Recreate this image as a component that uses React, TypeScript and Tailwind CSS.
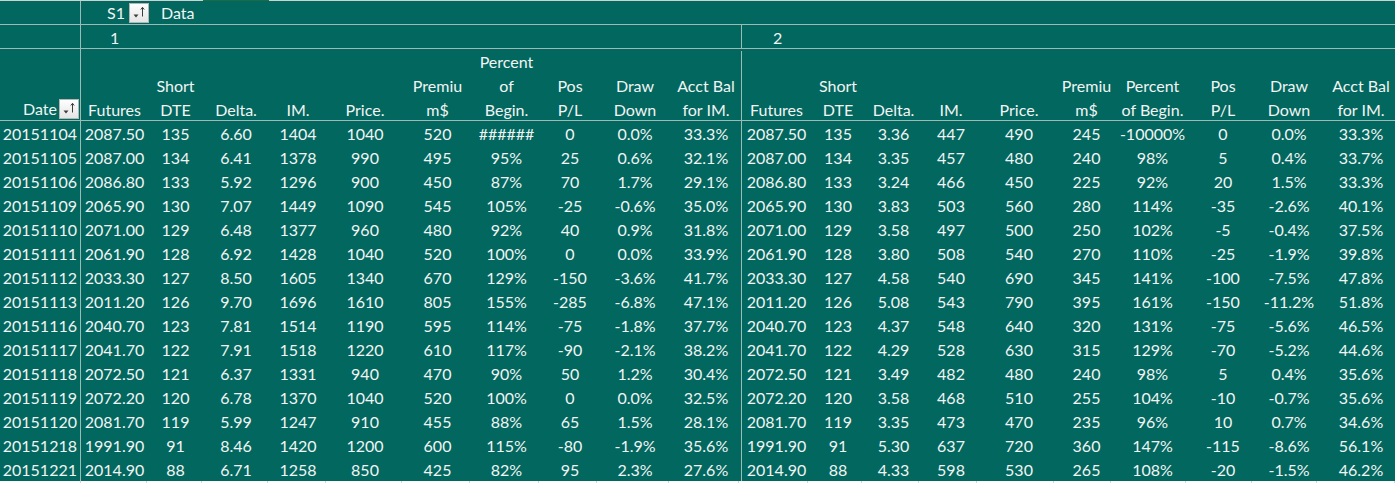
const line = "border-[#9dbbb6]"

const dateW = "w-[81px] border-r " + line
const g1 = [
  "w-[67px]",
  "w-[55px]",
  "w-[66px]",
  "w-[58px]",
  "w-[76px]",
  "w-[69px]",
  "w-[69px]",
  "w-[58px]",
  "w-[72px]",
  "w-[71px] border-r " + line,
]
const g2 = ["w-[69px]", "w-[54px]", "w-[57px]", "w-[58px]", "w-[78px]", "w-[57px]", "w-[75px]", "w-[66px]", "w-[66px]", "w-[78px]"]

const head1 = [
  ["Futures"],
  ["Short", "DTE"],
  ["Delta."],
  ["IM."],
  ["Price."],
  ["Premiu", "m$"],
  ["Percent", "of", "Begin."],
  ["Pos", "P/L"],
  ["Draw", "Down"],
  ["Acct Bal", "for IM."],
]
const head2 = [
  ["Futures"],
  ["Short", "DTE"],
  ["Delta."],
  ["IM."],
  ["Price."],
  ["Premiu", "m$"],
  ["Percent", "of Begin."],
  ["Pos", "P/L"],
  ["Draw", "Down"],
  ["Acct Bal", "for IM."],
]

const rows = [
  ["20151104", "2087.50 135 6.60 1404 1040 520 ###### 0 0.0% 33.3%", "2087.50 135 3.36 447 490 245 -10000% 0 0.0% 33.3%"],
  ["20151105", "2087.00 134 6.41 1378 990 495 95% 25 0.6% 32.1%", "2087.00 134 3.35 457 480 240 98% 5 0.4% 33.7%"],
  ["20151106", "2086.80 133 5.92 1296 900 450 87% 70 1.7% 29.1%", "2086.80 133 3.24 466 450 225 92% 20 1.5% 33.3%"],
  ["20151109", "2065.90 130 7.07 1449 1090 545 105% -25 -0.6% 35.0%", "2065.90 130 3.83 503 560 280 114% -35 -2.6% 40.1%"],
  ["20151110", "2071.00 129 6.48 1377 960 480 92% 40 0.9% 31.8%", "2071.00 129 3.58 497 500 250 102% -5 -0.4% 37.5%"],
  ["20151111", "2061.90 128 6.92 1428 1040 520 100% 0 0.0% 33.9%", "2061.90 128 3.80 508 540 270 110% -25 -1.9% 39.8%"],
  ["20151112", "2033.30 127 8.50 1605 1340 670 129% -150 -3.6% 41.7%", "2033.30 127 4.58 540 690 345 141% -100 -7.5% 47.8%"],
  ["20151113", "2011.20 126 9.70 1696 1610 805 155% -285 -6.8% 47.1%", "2011.20 126 5.08 543 790 395 161% -150 -11.2% 51.8%"],
  ["20151116", "2040.70 123 7.81 1514 1190 595 114% -75 -1.8% 37.7%", "2040.70 123 4.37 548 640 320 131% -75 -5.6% 46.5%"],
  ["20151117", "2041.70 122 7.91 1518 1220 610 117% -90 -2.1% 38.2%", "2041.70 122 4.29 528 630 315 129% -70 -5.2% 44.6%"],
  ["20151118", "2072.50 121 6.37 1331 940 470 90% 50 1.2% 30.4%", "2072.50 121 3.49 482 480 240 98% 5 0.4% 35.6%"],
  ["20151119", "2072.20 120 6.78 1370 1040 520 100% 0 0.0% 32.5%", "2072.20 120 3.58 468 510 255 104% -10 -0.7% 35.6%"],
  ["20151120", "2081.70 119 5.99 1247 910 455 88% 65 1.5% 28.1%", "2081.70 119 3.35 473 470 235 96% 10 0.7% 34.6%"],
  ["20151218", "1991.90 91 8.46 1420 1200 600 115% -80 -1.9% 35.6%", "1991.90 91 5.30 637 720 360 147% -115 -8.6% 56.1%"],
  ["20151221", "2014.90 88 6.71 1258 850 425 82% 95 2.3% 27.6%", "2014.90 88 4.33 598 530 265 108% -20 -1.5% 46.2%"],
]

function FilterButton() {
  return (
    <svg width="20" height="20" viewBox="0 0 20 20" className="shrink-0">
      <defs>
        <linearGradient id="fb" x1="0" y1="0" x2="0" y2="1">
          <stop offset="0" stopColor="#ffffff" />
          <stop offset="1" stopColor="#e4e4e4" />
        </linearGradient>
      </defs>
      <rect x="0.5" y="0.5" width="19" height="19" fill="url(#fb)" stroke="#b5b5b5" />
      <path d="M4.5 11.5 L9.5 11.5 L7 14.5 Z" fill="#3c3c3c" />
      <path d="M13.5 13.5 L13.5 4.5 M11.8 6.5 L13.5 4.3 L15.2 6.5" stroke="#3c3c3c" strokeWidth="1" fill="none" />
    </svg>
  )
}

export default function App() {
  return (
    <div className="w-[1395px] h-[483px] overflow-hidden bg-white font-['Lato',sans-serif] text-[16px] text-[#f2f4f3]">
      <div className="w-[1400px] bg-[#01675f]">
        {/* top edge */}
        <div className="flex h-px bg-[#c9d4d2]">
          <div className="w-[203px]" />
          <div className="w-[66px] bg-[#1d6b45]" />
        </div>

        {/* S1 / Data */}
        <div className={"flex h-[24px] border-b " + line}>
          <div className={dateW} />
          <div className="flex items-center pl-[26px] pt-px">
            <span>S1</span>
            <span className="ml-[4px] mt-[-1px]">
              <FilterButton />
            </span>
            <span className="ml-[12px]">Data</span>
          </div>
        </div>

        {/* group numbers */}
        <div className={"flex h-[24px] border-b leading-[26px] " + line}>
          <div className={dateW} />
          <div className={"w-[661px] border-r pl-[29px] " + line}>1</div>
          <div className="pl-[31px]">2</div>
        </div>

        {/* column headers */}
        <div className={"flex h-[72px] border-b " + line}>
          <div className={"flex items-end justify-end h-full pr-[1px] pb-[1px] " + dateW}>
            <span className="leading-[24px] mr-[2px] translate-y-[2px]">Date</span>
            <span>
              <FilterButton />
            </span>
          </div>
          {head1.map((h, i) => (
            <div key={"a" + i} className={"flex flex-col justify-end items-center h-full leading-[24px] translate-y-[2px] " + g1[i]}>
              {h.map((t) => (
                <span key={t} className="whitespace-nowrap">
                  {t}
                </span>
              ))}
            </div>
          ))}
          {head2.map((h, i) => (
            <div key={"b" + i} className={"flex flex-col justify-end items-center h-full leading-[24px] translate-y-[2px] " + g2[i]}>
              {h.map((t) => (
                <span key={t} className="whitespace-nowrap">
                  {t}
                </span>
              ))}
            </div>
          ))}
        </div>

        {/* data */}
        {rows.map((r) => (
          <div key={r[0]} className="flex h-[24px] leading-[26px]">
            <div className={"text-right pr-[3px] " + dateW}>{r[0]}</div>
            {r[1].split(" ").map((v, i) => (
              <div key={"a" + i} className={"text-center whitespace-nowrap " + g1[i]}>
                {v}
              </div>
            ))}
            {r[2].split(" ").map((v, i) => (
              <div key={"b" + i} className={"text-center whitespace-nowrap " + g2[i]}>
                {v}
              </div>
            ))}
          </div>
        ))}
      </div>

      {/* next sheet row: gridlines only */}
      <div className="flex h-[2px] bg-white">
        <div className="w-[81px] border-r border-[#d4d4d4]" />
        {g1.map((w, i) => (
          <div key={"a" + i} className={w.split(" ")[0] + " border-r border-[#d4d4d4]"} />
        ))}
        {g2.map((w, i) => (
          <div key={"b" + i} className={w + " border-r border-[#d4d4d4]"} />
        ))}
      </div>
    </div>
  )
}
